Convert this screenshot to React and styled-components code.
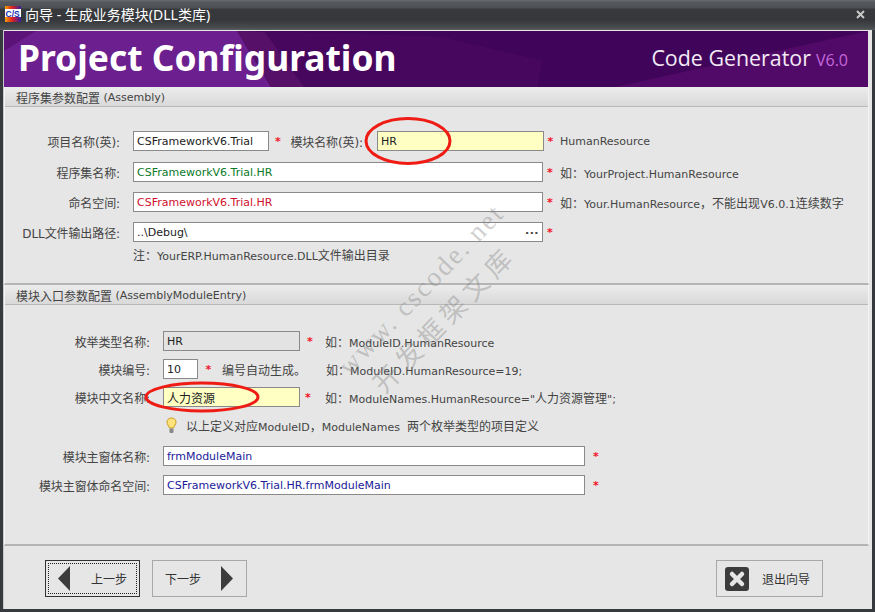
import React from 'react';
import styled, { createGlobalStyle } from 'styled-components';

const FONT = '"DejaVu Sans", "Noto Sans CJK SC", sans-serif';

const GlobalStyle = createGlobalStyle`
  html, body {
    margin: 0;
    padding: 0;
    background: #33363a;
  }
  * {
    box-sizing: border-box;
  }
`;

const Window = styled.div`
  position: relative;
  width: 875px;
  height: 612px;
  display: flex;
  flex-direction: column;
  overflow: hidden;
  background: #36393d;
  font-family: ${FONT};
  font-size: 11px;
  color: #333;
`;

const TitleBar = styled.div`
  height: 30px;
  flex: none;
  display: flex;
  align-items: center;
  padding: 0 10px 2px 5px;
  gap: 4px;
  background: linear-gradient(#6a6d70 0, #56595d 2px, #4c4f53 8px, #37393d 9px, #35373b 20px, #4a4d50 28px, #5c5f62 30px);
`;

const TitleText = styled.div`
  flex: 1;
  color: #fff;
  font-family: "Noto Sans", "Noto Sans CJK SC", sans-serif;
  font-size: 14px;
  white-space: nowrap;
`;

const AppIcon = styled.svg`
  width: 16px;
  height: 16px;
  flex: none;
`;

const CloseGlyph = styled.svg`
  width: 9px;
  height: 9px;
  flex: none;
`;

const Client = styled.div`
  flex: 1;
  min-height: 0;
  margin: 0 3px 3px 3px;
  display: flex;
  flex-direction: column;
  background: #e6e6e6;
  border-left: 1px solid #c9c9c9;
`;

const Banner = styled.div`
  position: relative;
  height: 56px;
  margin: 1px 4px 0 0;
  flex: none;
  display: flex;
  align-items: center;
  justify-content: space-between;
  padding: 0 20px 4px 14px;
  background: #40055a;
  overflow: hidden;
`;

const BannerArt = styled.svg`
  position: absolute;
  left: 0;
  top: 0;
  width: 864px;
  height: 56px;
`;

const BannerTitle = styled.div`
  position: relative;
  color: #fff;
  font-family: "Noto Sans", sans-serif;
  font-weight: 700;
  font-size: 35.4px;
  white-space: nowrap;
`;

const BannerBrand = styled.div`
  position: relative;
  color: #f2eaf5;
  font-family: "Open Sans", sans-serif;
  font-size: 21.4px;
  white-space: nowrap;
`;

const BrandVersion = styled.span`
  color: #c468dc;
  font-size: 16px;
  margin-left: 5px;
`;

const Group = styled.div`
  height: ${(p) => p.$height}px;
  flex: none;
  display: flex;
  flex-direction: column;
  margin-right: 3px;
  border-right: 1px solid #f4f4f4;
  border-bottom: 2px solid #b4b4b4;
  border-left: 1px solid #f4f4f4;
`;

const GroupHeader = styled.div`
  height: 20px;
  flex: none;
  display: flex;
  align-items: center;
  padding: 2px 0 0 11px;
  color: #444;
  white-space: pre;
  background: linear-gradient(#ececec, #d9d9d9);
  border-bottom: 1px solid #b8b8b8;
`;

const GroupBody = styled.div`
  display: flex;
  flex-direction: column;
  padding-top: ${(p) => p.$top}px;
  gap: ${(p) => p.$gap}px;
`;

const Row = styled.div`
  display: flex;
  align-items: center;
  height: 20px;
  margin-top: ${(p) => p.$mt || 0}px;
  white-space: pre;
`;

const Han = styled.span`
  font-family: "Noto Sans CJK SC", sans-serif;
  font-size: 12px;
`;

const Label = styled.div`
  width: ${(p) => p.$width}px;
  flex: none;
  text-align: right;
  padding-right: ${(p) => p.$pad ?? 13}px;
  font-size: 12px;
  letter-spacing: -0.1px;
  color: #444;
`;

const Field = styled.div`
  width: ${(p) => p.$width}px;
  height: 20px;
  flex: none;
  display: flex;
  align-items: center;
  justify-content: space-between;
  margin-left: ${(p) => p.$ml || 0}px;
  padding: 0 3px;
  border: 1px solid #8a8a8a;
  background: ${(p) => (p.$tone === 'yellow' ? '#ffffc4' : p.$tone === 'grey' ? '#e3e3e3' : '#fff')};
  color: ${(p) => p.$color || '#222'};
  overflow: hidden;
`;

const Dots = styled.span`
  letter-spacing: 0.5px;
  font-weight: 700;
  color: #444;
  line-height: 1;
  margin-top: -4px;
`;

const Required = styled.span`
  width: ${(p) => p.$width}px;
  flex: none;
  text-align: center;
  color: #f0142a;
  font-weight: 700;
`;

const Hint = styled.span`
  flex: none;
  width: ${(p) => (p.$width ? `${p.$width}px` : 'auto')};
  margin-left: ${(p) => p.$ml || 0}px;
  color: #444;
`;

const Note = styled.div`
  color: #444;
  margin-top: -6px;
  padding-left: ${(p) => p.$left}px;
`;

const TipIcon = styled.svg`
  width: 11px;
  height: 17px;
  flex: none;
  margin: 0 9px 0 161px;
`;

const Footer = styled.div`
  flex: 1;
  display: flex;
  align-items: flex-start;
  padding: 14px 49px 0 41px;
  gap: 12px;
`;

const WizardButton = styled.button`
  width: ${(p) => p.$width || 95}px;
  height: 37px;
  display: flex;
  align-items: center;
  justify-content: space-between;
  padding: 0 ${(p) => p.$pad || 12}px;
  margin: 0;
  margin-left: ${(p) => (p.$pushRight ? 'auto' : 0)};
  font-family: ${FONT};
  font-size: 12px;
  color: #333;
  background: #e6e6e6;
  border: 1px solid ${(p) => (p.$focused ? '#333' : '#a8a8a8')};
  outline: ${(p) => (p.$focused ? '1px dotted #222' : 'none')};
  outline-offset: -4px;
`;

const ArrowIcon = styled.svg`
  width: 13px;
  height: 25px;
  flex: none;
`;

const ExitIcon = styled.svg`
  width: 24px;
  height: 24px;
  flex: none;
`;

const ExitLabel = styled.span`
  margin-right: 4px;
`;

const Ring = styled.svg`
  position: absolute;
  left: ${(p) => p.$x}px;
  top: ${(p) => p.$y}px;
  width: ${(p) => p.$w}px;
  height: ${(p) => p.$h}px;
  pointer-events: none;
`;

const Watermark = styled.div`
  position: absolute;
  left: ${(p) => p.$x}px;
  top: ${(p) => p.$y}px;
  transform: rotate(-46deg);
  transform-origin: left top;
  font-family: ${(p) => p.$font};
  font-size: ${(p) => p.$size}px;
  letter-spacing: ${(p) => p.$spacing}px;
  color: rgba(130, 130, 130, 0.4);
  white-space: nowrap;
  pointer-events: none;
`;

function App() {
  return (
    <Window>
      <GlobalStyle />
      <TitleBar>
        <AppIcon viewBox="0 0 16 16">
          <defs>
            <linearGradient id="appGrad" x1="0" y1="0" x2="1" y2="0">
              <stop offset="0" stopColor="#f2a000" />
              <stop offset="0.45" stopColor="#e02020" />
              <stop offset="1" stopColor="#3020a0" />
            </linearGradient>
          </defs>
          <rect width="16" height="16" fill="url(#appGrad)" />
          <rect y="3" width="16" height="8" fill="#fff" />
          <text x="0.5" y="10.5" fontSize="8.5" fontWeight="700" fontFamily="Liberation Sans" fill="#1a2fb0">C/S</text>
        </AppIcon>
        <TitleText>向导 - 生成业务模块(DLL类库)</TitleText>
        <CloseGlyph viewBox="0 0 9 9">
          <path d="M1 1 L8 8 M8 1 L1 8" stroke="#c9c9c9" strokeWidth="2" />
        </CloseGlyph>
      </TitleBar>
      <Client>
        <Banner>
          <BannerArt viewBox="0 0 864 56">
            <polygon points="0,0 233,0 267,56 0,56" fill="#6c1f8e" />
            <polygon points="0,0 32,0 0,20" fill="#5c1378" />
            <polygon points="233,0 436,6 537,30 533,56 267,56" fill="#571068" />
            <polygon points="260,0 436,6 537,30 533,56 300,56" fill="#48075e" />
            <polygon points="612,56 864,0 864,56" fill="#520a68" />
          </BannerArt>
          <BannerTitle>Project Configuration</BannerTitle>
          <BannerBrand>
            Code Generator<BrandVersion>V6.0</BrandVersion>
          </BannerBrand>
        </Banner>

        <Group $height={198}>
          <GroupHeader><Han>程序集参数配置</Han> (Assembly)</GroupHeader>
          <GroupBody $top={24} $gap={10}>
            <Row>
              <Label $width={128}>项目名称(英):</Label>
              <Field $width={136}>CSFrameworkV6.Trial</Field>
              <Required $width={18}>*</Required>
              <Label $width={76} $pad={0}>模块名称(英):</Label>
              <Field $width={167} $ml={14} $tone="yellow">HR</Field>
              <Required $width={13}>*</Required>
              <Hint $ml={3}>HumanResource</Hint>
            </Row>
            <Row $mt={1}>
              <Label $width={128}>程序集名称:</Label>
              <Field $width={410} $color="#0a7a2a">CSFrameworkV6.Trial.HR</Field>
              <Required $width={14}>*</Required>
              <Hint $ml={3}><Han>如：</Han>YourProject.HumanResource</Hint>
            </Row>
            <Row>
              <Label $width={128}>命名空间:</Label>
              <Field $width={410} $color="#d0102c">CSFrameworkV6.Trial.HR</Field>
              <Required $width={14}>*</Required>
              <Hint $ml={3}><Han>如：</Han>Your.HumanResource<Han>，不能出现</Han>V6.0.1<Han>连续数字</Han></Hint>
            </Row>
            <Row>
              <Label $width={128}>DLL文件输出路径:</Label>
              <Field $width={410}>
                ..\Debug\
                <Dots>...</Dots>
              </Field>
              <Required $width={14}>*</Required>
            </Row>
            <Note $left={128}><Han>注：</Han>YourERP.HumanResource.DLL<Han>文件输出目录</Han></Note>
          </GroupBody>
        </Group>

        <Group $height={261}>
          <GroupHeader><Han>模块入口参数配置</Han> (AssemblyModuleEntry)</GroupHeader>
          <GroupBody $top={26} $gap={8}>
            <Row>
              <Label $width={158}>枚举类型名称:</Label>
              <Field $width={137} $tone="grey">HR</Field>
              <Required $width={20}>*</Required>
              <Hint $ml={5}><Han>如：</Han>ModuleID.HumanResource</Hint>
            </Row>
            <Row>
              <Label $width={158}>模块编号:</Label>
              <Field $width={35}>10</Field>
              <Required $width={21}>*</Required>
              <Hint $width={104} $ml={3}><Han>编号自动生成。</Han></Hint>
              <Hint><Han>如：</Han>ModuleID.HumanResource=19;</Hint>
            </Row>
            <Row>
              <Label $width={158}>模块中文名称:</Label>
              <Field $width={137} $tone="yellow"><Han>人力资源</Han></Field>
              <Required $width={16}>*</Required>
              <Hint $ml={9}><Han>如：</Han>ModuleNames.HumanResource="<Han>人力资源管理</Han>";</Hint>
            </Row>
            <Row>
              <TipIcon viewBox="0 0 11 17">
                <path d="M5.5 1 C2.6 1 1 3 1 5.2 C1 7.4 2.6 8.4 3.4 11 L7.6 11 C8.4 8.4 10 7.4 10 5.2 C10 3 8.4 1 5.5 1 Z" fill="#ffe27a" stroke="#c89a20" />
                <rect x="3.5" y="11.5" width="4" height="4.5" rx="1" fill="#888" />
              </TipIcon>
              <Hint><Han>以上定义对应</Han>ModuleID<Han>，</Han>ModuleNames  <Han>两个枚举类型的项目定义</Han></Hint>
            </Row>
            <Row $mt={3}>
              <Label $width={158}>模块主窗体名称:</Label>
              <Field $width={422} $color="#1a1a9a">frmModuleMain</Field>
              <Required $width={22}>*</Required>
            </Row>
            <Row $mt={1}>
              <Label $width={158}>模块主窗体命名空间:</Label>
              <Field $width={422} $color="#1a1a9a">CSFrameworkV6.Trial.HR.frmModuleMain</Field>
              <Required $width={22}>*</Required>
            </Row>
          </GroupBody>
        </Group>

        <Footer>
          <WizardButton $focused>
            <ArrowIcon viewBox="0 0 13 25">
              <polygon points="12,0 12,25 0,12.5" fill="#3c3c3c" />
            </ArrowIcon>
            上一步
          </WizardButton>
          <WizardButton>
            下一步
            <ArrowIcon viewBox="0 0 13 25">
              <polygon points="0,0 0,25 12,12.5" fill="#3c3c3c" />
            </ArrowIcon>
          </WizardButton>
          <WizardButton $pushRight $width={107} $pad={8}>
            <ExitIcon viewBox="0 0 24 24">
              <rect width="24" height="24" rx="3" fill="#3c3c3c" />
              <path d="M7 7 L17 17 M17 7 L7 17" stroke="#e6e6e6" strokeWidth="4.5" strokeLinecap="round" />
            </ExitIcon>
            <ExitLabel>退出向导</ExitLabel>
          </WizardButton>
        </Footer>
      </Client>

      <Ring $x={362} $y={116} $w={92} $h={50} viewBox="0 0 92 50">
        <ellipse cx="46" cy="25" rx="42" ry="22.5" fill="none" stroke="#ee1c14" strokeWidth="3" />
      </Ring>
      <Ring $x={143} $y={380} $w={118} $h={34} viewBox="0 0 118 34">
        <ellipse cx="59" cy="17" rx="56" ry="14" fill="none" stroke="#ee1c14" strokeWidth="3" />
      </Ring>
      <Watermark $x={332} $y={360} $font='"Liberation Serif", serif' $size={27} $spacing={2.2}>www. cscode. net</Watermark>
      <Watermark $x={363} $y={374} $font='"Noto Sans CJK SC", sans-serif' $size={26} $spacing={6}>开发框架文库</Watermark>
    </Window>
  );
}

export default App;
